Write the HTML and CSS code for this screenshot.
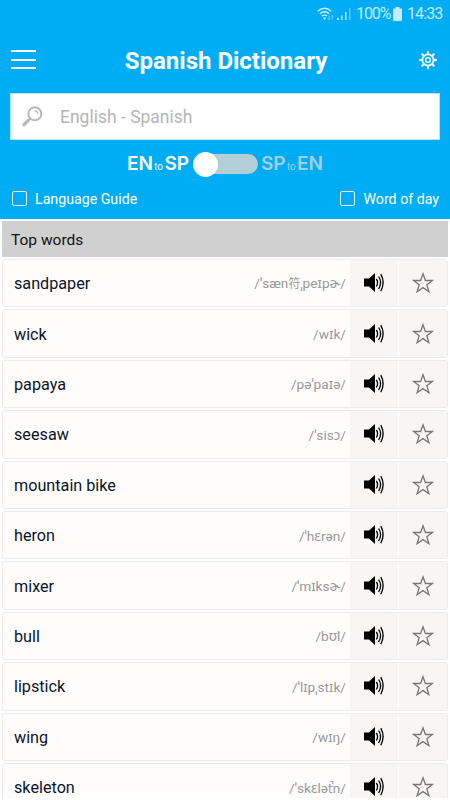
FILE: index.html
```html
<!DOCTYPE html>
<html lang="en">
<head>
<meta charset="utf-8">
<title>Spanish Dictionary</title>
<link rel="stylesheet" href="styles.css">
</head>
<body>
<svg class="defs" width="0" height="0">
  <symbol id="speaker" viewBox="0 0 20 20">
    <path d="M0 5.500h5L11 0v19l-6-5.500H0z"/>
    <path d="M12.300 6q2.600 3.500 0 7.500M14.600 3.500q4 6 0 12.500M16.800 1.200q4.600 8.300 0 17" fill="none" stroke="#000" stroke-width="1.350"/>
  </symbol>
  <symbol id="star" viewBox="0 0 22 22">
    <path d="M11 1.800l2.400 6.700h7l-5.600 4.300 2.100 6.900-5.900-4.100-5.900 4.100 2.100-6.900-5.600-4.300h7z" fill="none" stroke="#777" stroke-width="1.300"/>
  </symbol>
</svg>
<div class="app">
  <header class="head">
    <div class="status">
      <svg class="wifi" width="18" height="15" viewBox="0 0 18 15" fill="none" stroke="#c5ecfd" stroke-width="1.300">
        <path d="M.7 4.300Q7.500-1.700 14.300 4.300M2.800 6.800Q7.500 2.600 12.200 6.800M4.800 9.100Q7.500 7 10 9.100"/>
        <path d="M5.600 10.500h3.800L7.500 13z" fill="#c5ecfd" stroke="none"/>
        <path d="M12 8.500v4M10.700 11.200l1.300 1.500 1.300-1.500M15.300 12.500v-4M14 9.800l1.300-1.500 1.300 1.500" stroke="#70cff8" stroke-width=".9"/>
      </svg>
      <svg class="signal" width="14" height="14" viewBox="0 0 14 14">
        <path d="M0 11h2v2H0zM4 8.500h1.500V13H4zM8 5h1.500v8H8z" fill="#c5ecfd"/><path d="M12 1h1.500v12H12z" fill="#65cbf8"/>
      </svg>
      <span class="pct">100%</span>
      <svg class="battery" width="9" height="14" viewBox="0 0 9 14"><path d="M2.500 0h4v1.500H8q1 0 1 1V13q0 1-1 1H1q-1 0-1-1V2.500q0-1 1-1h1.500z" fill="#c5ecfd"/></svg>
      <span class="clock">14:33</span>
    </div>
    <div class="bar">
      <div class="menu"><i></i><i></i><i></i></div>
      <h1>Spanish Dictionary</h1>
      <svg class="gear" width="18" height="18" viewBox="0 0 18 18" fill="none" stroke="#fff">
        <circle cx="9" cy="9" r="5.600" stroke-width="1.700"/><circle cx="9" cy="9" r="2.400" stroke-width="1.400"/>
        <path d="M9 0v3M9 15v3M0 9h3M15 9h3M2.600 2.600l2.100 2.100M13.300 13.300l2.100 2.100M2.600 15.400l2.100-2.100M13.300 4.700l2.100-2.100" stroke-width="2"/>
      </svg>
    </div>
    <div class="search">
      <svg width="21" height="21" viewBox="0 0 21 21" fill="none" stroke="#b9b9b9">
        <circle cx="12.800" cy="7.800" r="6.500" stroke-width="2"/>
        <path d="M12.500 4.600q3 .1 3.400 3.300" stroke-width="1.200"/>
        <path d="M8 12.500l-2.200 2.200" stroke-width="2"/><path d="M6 14.700l-4 4" stroke-width="3.300" stroke-linecap="round"/>
      </svg>
      <span>English - Spanish</span>
    </div>
    <div class="switch">
      <div class="dir"><b>EN</b><small>to</small><b>SP</b></div>
      <div class="toggle"><i></i></div>
      <div class="dir off"><b>SP</b><small>to</small><b>EN</b></div>
    </div>
    <div class="checks">
      <div class="check"><i></i><span>Language Guide</span></div>
      <div class="check"><i></i><span>Word of day</span></div>
    </div>
  </header>
  <h2>Top words</h2>
  <main>
    <div class="row"><span class="word">sandpaper</span><span class="ipa">/ˈsæn<span class="han">符</span>ˌpeɪpɚ/</span><span class="act"><svg class="spk"><use href="#speaker"/></svg></span><span class="act fav"><svg class="str"><use href="#star"/></svg></span></div>
    <div class="row"><span class="word">wick</span><span class="ipa">/wɪk/</span><span class="act"><svg class="spk"><use href="#speaker"/></svg></span><span class="act fav"><svg class="str"><use href="#star"/></svg></span></div>
    <div class="row"><span class="word">papaya</span><span class="ipa">/pəˈpaɪə/</span><span class="act"><svg class="spk"><use href="#speaker"/></svg></span><span class="act fav"><svg class="str"><use href="#star"/></svg></span></div>
    <div class="row"><span class="word">seesaw</span><span class="ipa">/ˈsisɔ/</span><span class="act"><svg class="spk"><use href="#speaker"/></svg></span><span class="act fav"><svg class="str"><use href="#star"/></svg></span></div>
    <div class="row"><span class="word">mountain bike</span><span class="ipa"></span><span class="act"><svg class="spk"><use href="#speaker"/></svg></span><span class="act fav"><svg class="str"><use href="#star"/></svg></span></div>
    <div class="row"><span class="word">heron</span><span class="ipa">/ˈhɛrən/</span><span class="act"><svg class="spk"><use href="#speaker"/></svg></span><span class="act fav"><svg class="str"><use href="#star"/></svg></span></div>
    <div class="row"><span class="word">mixer</span><span class="ipa">/ˈmɪksɚ/</span><span class="act"><svg class="spk"><use href="#speaker"/></svg></span><span class="act fav"><svg class="str"><use href="#star"/></svg></span></div>
    <div class="row"><span class="word">bull</span><span class="ipa">/bʊl/</span><span class="act"><svg class="spk"><use href="#speaker"/></svg></span><span class="act fav"><svg class="str"><use href="#star"/></svg></span></div>
    <div class="row"><span class="word">lipstick</span><span class="ipa">/ˈlɪpˌstɪk/</span><span class="act"><svg class="spk"><use href="#speaker"/></svg></span><span class="act fav"><svg class="str"><use href="#star"/></svg></span></div>
    <div class="row"><span class="word">wing</span><span class="ipa">/wɪŋ/</span><span class="act"><svg class="spk"><use href="#speaker"/></svg></span><span class="act fav"><svg class="str"><use href="#star"/></svg></span></div>
    <div class="row"><span class="word">skeleton</span><span class="ipa">/ˈskɛlə<span class="mark">t̚</span>n/</span><span class="act"><svg class="spk"><use href="#speaker"/></svg></span><span class="act fav"><svg class="str"><use href="#star"/></svg></span></div>
  </main>
</div>
</body>
</html>
```

FILE: styles.css
```css
* { box-sizing: border-box; }
body { margin: 0; background: #fff; font-family: Roboto, "Noto Sans", "Noto Sans CJK SC", sans-serif; }
.defs { display: block; }
svg { flex: none; }
.app { width: 450px; height: 798px; overflow: hidden; }
.head { height: 219px; background: #00adf5; color: #fff; }
.status { height: 28px; padding-right: 9px; display: flex; justify-content: flex-end; align-items: center; color: #c5ecfd; font-size: 16px; line-height: 30px; white-space: nowrap; }
.wifi { margin-right: 2px; }
.signal { margin-right: 5px; }
.pct { width: 33px; margin-right: 4px; letter-spacing: -1.100px; }
.battery { margin: 0 5px 1px 0; }
.clock { width: 34px; letter-spacing: -0.9px; }
.bar { height: 65px; padding: 0 13px 2px 11px; display: flex; align-items: center; justify-content: space-between; }
.menu { width: 25px; display: grid; gap: 6.500px; }
.menu i { height: 2px; background: #fff; }
h1 { margin: 2px 3px 0 0; font-size: 24px; line-height: 28px; font-weight: 700; white-space: nowrap; }
.search { height: 47px; margin: 0 10px; padding-left: 11px; display: flex; align-items: center; gap: 17px; background: #fff; border: 1px solid #b5e4fa; color: #b5b5b5; font-size: 17.500px; }
.switch { height: 48px; display: flex; align-items: center; padding-left: 127px; font-family: Inter, sans-serif; }
.dir { width: 62px; padding-top: 3px; display: flex; align-items: baseline; justify-content: space-between; font-size: 19px; line-height: 22px; }
.dir b { font-weight: 600; }
.dir small { font-size: 9.500px; }
.dir.off { color: #a5cfdf; }
.toggle { width: 65px; height: 20px; margin: 0 3px 0 4px; border-radius: 10px; background: #b4ced8; display: flex; align-items: center; }
.toggle i { width: 25px; height: 25px; flex: none; border-radius: 50%; background: #fff; }
.checks { height: 28px; padding: 0 11px 0 12px; display: flex; justify-content: space-between; align-items: center; font-size: 14.200px; margin-top: -4px; }
.check { display: flex; align-items: center; gap: 8px; }
.check span { padding-top: 2px; }
.check i { width: 15px; height: 15px; border: 1px solid #e5f7fe; border-radius: 2px; }
h2 { height: 36px; margin: 2px 2px 2px; padding-left: 9px; background: #d0d0d0; color: #111; font-size: 15.500px; line-height: 38px; font-weight: 400; }
main { padding: 0 2px; display: grid; grid-auto-rows: 48.400px; row-gap: 2px; }
.row { display: grid; grid-template-columns: 1fr auto 48px 49px; align-items: center; border: 1px solid #ebebed; border-radius: 3px; background: #fefdfc; overflow: hidden; }
.word { padding: 1px 0 0 11px; color: #0b1429; font-size: 16.200px; }
.ipa { padding: 1px 4px 0 0; color: #999; font-size: 13.700px; line-height: 18px; white-space: nowrap; }
.han { font-size: 12px; }
.mark { font-family: "DejaVu Sans", sans-serif; font-size: 12px; line-height: 1; }
.act { height: 100%; display: flex; align-items: center; justify-content: center; background: #f7f6f5; }
.fav { border-left: 1px solid #fff; }
.spk { width: 20px; height: 20px; }
.str { width: 22px; height: 22px; }
```
